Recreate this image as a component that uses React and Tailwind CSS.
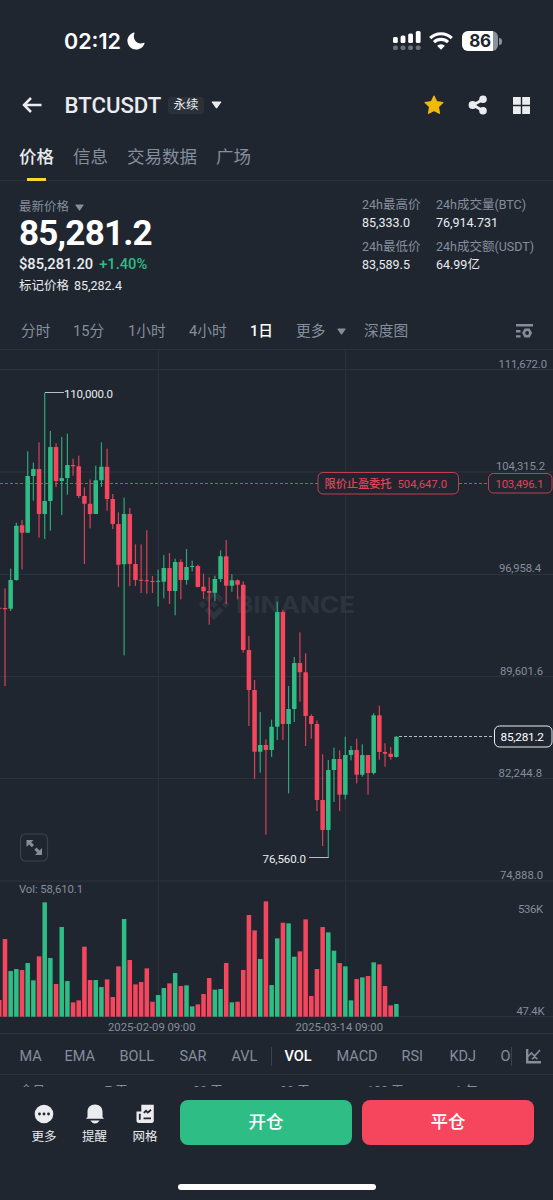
const UP = '#2ebd85';
const DOWN = '#f6465d';
const GRID = '#2b323c';
const STEP = 5.672;

// [up, high, bodyTop, bodyBottom, low, volume], in thirds of a pixel
const candles = [
  [0, 740, 773, 776, 810, 50],
  [0, 715, 774, 778, 1008, 233],
  [1, 656, 690, 776, 783, 137],
  [1, 518, 527, 690, 692, 143],
  [0, 510, 526, 548, 658, 140],
  [1, 304, 378, 548, 548, 161],
  [1, 338, 357, 378, 452, 109],
  [0, 277, 357, 492, 563, 181],
  [1, 128, 453, 492, 567, 343],
  [1, 243, 291, 453, 542, 176],
  [0, 280, 291, 393, 411, 98],
  [1, 261, 384, 393, 495, 269],
  [1, 251, 345, 384, 434, 107],
  [0, 326, 345, 349, 377, 43],
  [0, 317, 349, 438, 444, 49],
  [0, 412, 438, 461, 642, 210],
  [0, 388, 461, 492, 535, 110],
  [1, 347, 391, 492, 492, 110],
  [1, 277, 350, 391, 411, 89],
  [0, 296, 350, 447, 482, 112],
  [0, 432, 447, 522, 537, 59],
  [0, 487, 522, 644, 711, 151],
  [1, 443, 492, 643, 916, 293],
  [0, 474, 492, 642, 708, 170],
  [0, 583, 642, 690, 708, 97],
  [0, 583, 689, 692, 729, 104],
  [0, 541, 691, 694, 731, 145],
  [0, 678, 693, 696, 729, 45],
  [1, 659, 692, 695, 769, 65],
  [1, 615, 654, 695, 745, 86],
  [0, 609, 654, 723, 762, 100],
  [1, 626, 636, 723, 796, 131],
  [0, 628, 636, 690, 748, 92],
  [1, 597, 651, 690, 704, 94],
  [1, 632, 648, 651, 664, 31],
  [0, 644, 648, 711, 712, 37],
  [0, 671, 710, 724, 747, 68],
  [0, 682, 723, 728, 824, 116],
  [1, 677, 687, 728, 753, 81],
  [1, 601, 619, 687, 696, 83],
  [0, 570, 619, 707, 762, 161],
  [1, 672, 691, 707, 725, 43],
  [0, 688, 691, 704, 748, 45],
  [0, 694, 704, 900, 908, 140],
  [0, 858, 900, 1020, 1128, 305],
  [0, 990, 1020, 1205, 1287, 259],
  [1, 1086, 1185, 1205, 1268, 173],
  [0, 1168, 1185, 1200, 1454, 346],
  [1, 1109, 1130, 1200, 1221, 95],
  [1, 755, 786, 1130, 1170, 235],
  [0, 780, 786, 1122, 1170, 282],
  [1, 1008, 1077, 1122, 1330, 280],
  [1, 921, 939, 1077, 1116, 180],
  [0, 847, 939, 967, 1055, 196],
  [0, 910, 967, 1098, 1188, 292],
  [0, 1093, 1098, 1122, 1166, 62],
  [0, 1111, 1122, 1350, 1383, 143],
  [0, 1213, 1350, 1440, 1488, 269],
  [1, 1230, 1260, 1440, 1524, 253],
  [1, 1193, 1227, 1260, 1356, 198],
  [0, 1201, 1227, 1334, 1383, 161],
  [1, 1160, 1215, 1334, 1348, 151],
  [1, 1188, 1200, 1215, 1231, 49],
  [0, 1166, 1200, 1274, 1300, 113],
  [1, 1183, 1215, 1274, 1280, 118],
  [0, 1215, 1215, 1269, 1334, 122],
  [1, 1090, 1096, 1269, 1274, 163],
  [0, 1067, 1096, 1206, 1229, 157],
  [0, 1180, 1206, 1211, 1250, 92],
  [0, 1191, 1211, 1221, 1229, 34],
  [1, 1158, 1160, 1221, 1223, 38],
];

const axisLabels = [
  ['111,672.0', 498.5, 18, 48.5],
  ['104,315.2', 496, 120, 49],
  ['96,958.4', 499, 222, 42],
  ['89,601.6', 500, 324.5, 43],
  ['82,244.8', 498.5, 427, 43.5],
  ['74,888.0', 500, 529, 43],
  ['536K', 518, 563, 25],
  ['47.4K', 516.5, 664.5, 28],
];

const periods = [
  ['今日', 'left-5'],
  ['7 天', 'left-[105px]'],
  ['30 天', 'left-[193px]'],
  ['90 天', 'left-[280px]'],
  ['180 天', 'left-[367px]'],
  ['1 年', 'left-[455px]'],
];

function Caret({ className }) {
  return (
    <svg viewBox="0 0 12 9" className={className} fill="currentColor">
      <path d="M1.2 0.5h9.6q1 0 .5 1L6.8 8Q6 9 5.2 8L.7 1.5q-.5-1 .5-1z" />
    </svg>
  );
}

function StatusBar() {
  return (
    <div className="flex h-20 items-center pl-16 pr-[51px] pt-0.5 text-white">
      <span className="w-[58px] whitespace-nowrap font-[Inter,sans-serif] text-[21.5px] font-semibold">02:12</span>
      <svg viewBox="0 0 18 18" className="ml-[5px] size-[18px]" fill="currentColor">
        <path d="M7 .4C3 1.600.4 5 .4 9A8.600 8.600 0 0 0 9 17.600c4.200 0 7.500-2.500 8.600-6.300.1-.6-.3-.7-.8-.5-1 .5-2 .7-3.200.7A7 7 0 0 1 6.800 4.600c0-1.200.3-2.300.7-3.400.2-.6 0-.9-.5-.8z" />
      </svg>
      <svg viewBox="0 0 28 20" className="ml-auto h-5 w-7" fill="currentColor">
        <rect x="0" y="6" width="4.800" height="6" rx="1.500" />
        <rect x="7.600" y="4.500" width="4.800" height="7.500" rx="1.500" />
        <rect x="15.200" y="2.500" width="4.800" height="9.500" rx="1.500" />
        <rect x="22.800" y="0" width="4.800" height="12" rx="1.500" />
        <g opacity="0.35">
          <rect x="0" y="14.500" width="4.800" height="4.500" rx="1.800" />
          <rect x="7.600" y="14.500" width="4.800" height="4.500" rx="1.800" />
          <rect x="15.200" y="14.500" width="4.800" height="4.500" rx="1.800" />
          <rect x="22.800" y="14.500" width="4.800" height="4.500" rx="1.800" />
        </g>
      </svg>
      <svg viewBox="0 0 24 18" className="ml-2 h-[18px] w-6" fill="none" stroke="currentColor" strokeWidth="3.100">
        <path d="M1.200 6.200a15.400 15.400 0 0 1 21.600 0" />
        <path d="M5 10.200a10 10 0 0 1 14 0" />
        <path d="M12 17.800l-3.900-4a5.600 5.600 0 0 1 7.800 0z" fill="currentColor" stroke="none" />
      </svg>
      <div className="ml-[9px] flex items-center">
        <div className="flex h-5 w-9 items-center justify-center rounded-[6px] bg-linear-to-r from-white from-86% to-[#8d9096] to-86% pt-px font-[Inter,sans-serif] text-[17px] font-bold leading-none tracking-[-0.3px] text-[#202630]">86</div>
        <div className="ml-px h-[7px] w-[3px] rounded-r-full bg-[#8d9096]" />
      </div>
    </div>
  );
}

function Header() {
  return (
    <div className="flex h-[50px] items-center pl-[22px] pr-[23px] text-[#eaecef]">
      <svg viewBox="0 0 20 16" className="h-4 w-5" fill="none" stroke="currentColor" strokeWidth="2.500">
        <path d="M19.500 8H2M9 1L2 8l7 7" />
      </svg>
      <h1 className="ml-[22.500px] w-[98px] whitespace-nowrap pt-0.5 text-[22.200px] font-medium">BTCUSDT</h1>
      <span className="ml-[5.500px] flex h-[17px] w-9 items-center justify-center rounded-[3px] bg-[#2b3139] text-[12.500px]">永续</span>
      <Caret className="ml-[7px] h-2 w-[11px]" />
      <svg viewBox="0 0 20 20" className="ml-auto size-5 text-[#f0b90b]" fill="currentColor" stroke="currentColor" strokeWidth="1.400" strokeLinejoin="round">
        <path d="M10 1.200l2.600 5.600 6.200.8-4.500 4.200 1.100 6.400L10 15.300l-5.400 2.900 1.100-6.400L1.200 7.600l6.200-.8z" />
      </svg>
      <svg viewBox="0 0 20 20" className="ml-6 size-5" fill="currentColor">
        <path d="M15 4.500L5 10l10 5.800" fill="none" stroke="currentColor" strokeWidth="2.800" />
        <circle cx="15" cy="4.200" r="3.800" />
        <circle cx="4.600" cy="10" r="4" />
        <circle cx="15" cy="15.800" r="3.800" />
      </svg>
      <svg viewBox="0 0 17 17" className="ml-[25px] size-[17px]" fill="currentColor">
        <path d="M0 0h7.800v7.800H0zM9.200 0H17v7.800H9.200zM0 9.200h7.800V17H0zM9.200 9.200H17V17H9.200z" />
      </svg>
    </div>
  );
}

function Tabs() {
  return (
    <div className="flex h-[51px] items-center gap-[19px] border-b border-[#2b323c] px-[19px] pt-[5px] text-[17.500px] text-[#848e9c]">
      <div className="relative flex h-[45px] items-center font-medium text-[#eaecef]">
        价格
        <span className="absolute -bottom-px left-2 h-[3.500px] w-[19px] bg-[#fcd535]" />
      </div>
      <span>信息</span>
      <span>交易数据</span>
      <span>广场</span>
    </div>
  );
}

function Stat({ label, value }) {
  return (
    <div className="h-[41.500px] whitespace-nowrap">
      <div className="h-[18px] leading-[18px] text-[#848e9c]">{label}</div>
      <div className="h-[18px] leading-[18px] text-[#eaecef]">{value}</div>
    </div>
  );
}

function Ticker() {
  return (
    <div className="flex h-[132px] text-[12.500px]">
      <div className="w-[362px] shrink-0 pl-[19px] pt-[17px]">
        <div className="flex h-[18px] items-center text-[#848e9c]">
          最新价格
          <Caret className="ml-[6px] h-[7px] w-[9px]" />
        </div>
        <div className="h-[35px] text-[35px] font-bold leading-[35px] tracking-[-0.800px] text-white">85,281.2</div>
        <div className="flex h-[24px] items-end gap-[6px] text-[14.700px] font-medium leading-[21px] text-[#eaecef]">
          <span>$85,281.20</span>
          <span className="text-[#2ebd85]">+1.40%</span>
        </div>
        <div className="mt-0.5 flex h-[18px] items-center gap-[5px] text-[#eaecef]">
          <span>标记价格</span>
          <span>85,282.4</span>
        </div>
      </div>
      <div className="w-[74px] shrink-0 pt-[15px]">
        <Stat label="24h最高价" value="85,333.0" />
        <Stat label="24h最低价" value="83,589.5" />
      </div>
      <div className="pt-[15px]">
        <Stat label="24h成交量(BTC)" value="76,914.731" />
        <Stat label="24h成交额(USDT)" value="64.99亿" />
      </div>
    </div>
  );
}

function Intervals() {
  return (
    <div className="flex h-[37px] items-center whitespace-nowrap border-b border-[#2b323c] pl-[21px] pr-5 text-[14.700px] text-[#848e9c]">
      <span className="w-[52px]">分时</span>
      <span className="w-[55px]">15分</span>
      <span className="w-[61px]">1小时</span>
      <span className="w-[61px]">4小时</span>
      <span className="w-[46px] font-medium text-white">1日</span>
      <span className="w-[41px]">更多</span>
      <Caret className="h-[7px] w-[9px]" />
      <span className="ml-[18px]">深度图</span>
      <svg viewBox="0 0 17 16" className="ml-auto h-4 w-[17px]" fill="currentColor">
        <path d="M0 1h17v2.400H0zM0 7h4.500v2.400H0zM0 12.200h4.500v2.400H0z" />
        <path d="M8.600 5.600h5l2.500 4.400-2.500 4.400h-5L6.100 10z" />
        <circle cx="11.100" cy="10" r="1.900" fill="#202630" />
      </svg>
    </div>
  );
}

function Chart() {
  return (
    <svg viewBox="0 0 553 684" className="block h-[684px] w-[553px] shrink-0 font-[Roboto,'Noto_Sans_CJK_SC',sans-serif]">
      {[19.5, 122, 224.5, 326.5, 428.5, 531, 666.5, 683.5].map((y) => (
        <rect key={y} x="0" y={y - 0.5} width="553" height="1" fill={GRID} />
      ))}
      <rect x="158" y="0" width="1" height="667" fill={GRID} />
      <rect x="345" y="0" width="1" height="667" fill={GRID} />

      {/* watermark */}
      <g fill="#2d343e">
        <path d="M214 239l9.500 9.500-3.700 3.700-5.800-5.800-5.800 5.800-3.700-3.700zM214 270l-9.500-9.500 3.700-3.700 5.800 5.800 5.800-5.800 3.700 3.700zM214 250.700l3.800 3.800-3.800 3.800-3.800-3.800zM202.400 250.700l3.800 3.800-3.800 3.800-3.800-3.800zM225.600 250.700l3.800 3.800-3.800 3.800-3.800-3.800z" />
        <text x="236" y="262.500" fontSize="22.500" fontWeight="700" textLength="119" lengthAdjust="spacingAndGlyphs" className="font-[Inter,sans-serif]">BINANCE</text>
      </g>

      {candles.map(([up, high, top, bottom, low, vol], i) => {
        const x = 5 + STEP * (i - 1);
        const color = up ? UP : DOWN;
        return (
          <g key={i} fill={color}>
            <rect x={x - 0.6} y={high / 3} width="1.200" height={(low - high) / 3} opacity="0.85" />
            <rect x={x - 2.25} y={top / 3} width="4.500" height={Math.max((bottom - top) / 3, 1)} rx="0.400" />
            <rect x={x - 2.25} y={666.7 - vol / 3} width="4.500" height={vol / 3} />
          </g>
        );
      })}

      {/* high and low markers */}
      <g stroke="#b7bdc6" strokeWidth="1" fill="none">
        <path d="M45 42.500h19M309 507.500h19.500" />
      </g>
      <g fill="#eaecef" fontSize="11.500">
        <text x="64" y="47.500" textLength="49">110,000.0</text>
        <text x="262.500" y="512.500" textLength="43.500">76,560.0</text>
      </g>

      {/* take profit order */}
      <path d="M0 133.500h318M459 133.500h29" stroke={DOWN} strokeDasharray="3 2" opacity="0.85" />
      <g fill="#202630" stroke={DOWN} strokeOpacity="0.750">
        <rect x="318" y="122.500" width="140.500" height="21.500" rx="5" />
        <rect x="488.500" y="123.500" width="63.500" height="19.500" rx="5" />
      </g>
      <g fill="#e0425a" fontSize="11.300">
        <text x="324.500" y="138" textLength="67" fontWeight="500">限价止盈委托</text>
        <text x="397.500" y="138" textLength="49.500">504,647.0</text>
        <text x="495.500" y="138" textLength="48">103,496.1</text>
      </g>

      {/* last price */}
      <path d="M399 386.500h95" stroke="#b7bdc6" strokeDasharray="3 2" />
      <rect x="494.500" y="376" width="57.500" height="21" rx="5" fill="#202630" stroke="#eaecef" />
      <text x="500.500" y="391" fontSize="11.800" fill="#fff" textLength="43.500">85,281.2</text>

      <g fill="#848e9c" fontSize="11.300">
        {axisLabels.map(([label, x, y, w]) => (
          <text key={label} x={x} y={y} textLength={w}>{label}</text>
        ))}
        <text x="19" y="542.500" textLength="64">Vol: 58,610.1</text>
        <text x="108" y="680.500" textLength="87.500">2025-02-09 09:00</text>
        <text x="295.500" y="680.500" textLength="87.500">2025-03-14 09:00</text>
      </g>

      {/* fullscreen button */}
      <rect x="20.500" y="484" width="27" height="27" rx="5" fill="#202630" stroke="#3a424e" strokeWidth="1.200" />
      <path d="M26.500 490h7l-2.300 2.300 2.800 2.800-2.200 2.200-2.800-2.800-2.500 2.500zM42 505h-7l2.300-2.300-3-3 2.200-2.200 3 3 2.500-2.500z" fill="#848e9c" />
    </svg>
  );
}

function Indicators() {
  return (
    <div className="flex h-[41px] shrink-0 items-center whitespace-nowrap border-b border-[#2b323c] pl-[19.500px] pt-[5px] text-[14.500px] text-[#848e9c]">
      <span className="w-[45px]">MA</span>
      <span className="w-[55px]">EMA</span>
      <span className="w-[60px]">BOLL</span>
      <span className="w-[52px]">SAR</span>
      <span className="w-[39px]">AVL</span>
      <span className="h-[19px] w-px bg-[#3a424e]" />
      <span className="ml-[13px] w-[52px] font-medium text-white">VOL</span>
      <span className="w-[65px]">MACD</span>
      <span className="w-12">RSI</span>
      <span className="w-[51px]">KDJ</span>
      <span className="w-[10.500px] overflow-hidden">OBV</span>
      <span className="h-[19px] w-px bg-[#3a424e]" />
      <svg viewBox="0 0 15 15" className="ml-[13.500px] size-[15px]" fill="none" stroke="currentColor">
        <path d="M1.200 0v13.200H15" strokeWidth="2.400" />
        <path d="M2 7.500L5.500 4l3 3L14 1M6 10.200l2.700-2.200 2.700 2.200" strokeWidth="1.600" />
      </svg>
    </div>
  );
}

function BottomBar() {
  return (
    <div className="flex h-[58px] shrink-0 items-start px-[19px] pt-[13px] text-[#eaecef]">
      <div className="flex w-[50px] flex-col items-center pt-1 text-[12.500px]">
        <svg viewBox="0 0 20 20" className="size-5" fill="currentColor">
          <circle cx="10" cy="10" r="9.300" />
          <g fill="#202630">
            <circle cx="5.500" cy="10" r="1.400" />
            <circle cx="10" cy="10" r="1.400" />
            <circle cx="14.500" cy="10" r="1.400" />
          </g>
        </svg>
        <span className="leading-[25px]">更多</span>
      </div>
      <div className="flex w-[51px] flex-col items-center pt-1 text-[12.500px]">
        <svg viewBox="0 0 20 20" className="size-5" fill="currentColor">
          <path d="M10 .5c4.500 0 7.500 3 7.500 7.200v5.300l1.500 1.800H1l1.500-1.800V7.700C2.500 3.500 5.500.5 10 .5zM5.300 16.600h9.400Q12.800 19.600 10 19.600t-4.700-3z" />
        </svg>
        <span className="leading-[25px]">提醒</span>
      </div>
      <div className="flex w-[50px] flex-col items-center pt-1 text-[12.500px]">
        <svg viewBox="0 0 20 20" className="size-5" fill="currentColor">
          <path d="M6.300 .8H18.800v15.700a2.500 2.500 0 0 1-2.500 2.500H4a2.500 2.500 0 0 1-2.500-2.500V7.500h4.800z" />
          <path d="M4.800 9.700v6M8.500 14.300h7.500M8.800 8.800l2.200-2 1.800 1.800L16 5.800" fill="none" stroke="#202630" strokeWidth="1.800" />
        </svg>
        <span className="leading-[25px]">网格</span>
      </div>
      <button className="ml-[10px] h-[45px] w-[172px] shrink-0 rounded-lg bg-[#2ebd85] text-[17.500px] font-medium text-white">开仓</button>
      <button className="ml-[10px] h-[45px] w-[172px] shrink-0 rounded-lg bg-[#f6465d] text-[17.500px] font-medium text-white">平仓</button>
    </div>
  );
}

export default function App() {
  return (
    <div className="flex h-[1200px] w-[553px] flex-col overflow-hidden bg-[#202630] font-[Roboto,'Noto_Sans_CJK_SC',sans-serif]">
      <StatusBar />
      <Header />
      <Tabs />
      <Ticker />
      <Intervals />
      <Chart />
      <Indicators />
      {/* the return summary starts under the bottom bar, only its top edge shows */}
      <div className="relative h-3 shrink-0 overflow-hidden text-[12.500px] text-[#848e9c]">
        {periods.map(([label, left]) => (
          <span key={label} className={`absolute top-[6.500px] whitespace-nowrap leading-[18px] ${left}`}>{label}</span>
        ))}
      </div>
      <BottomBar />
      <div className="mx-auto mt-auto mb-[10px] h-[6.500px] w-[198px] shrink-0 rounded-full bg-white" />
    </div>
  );
}
